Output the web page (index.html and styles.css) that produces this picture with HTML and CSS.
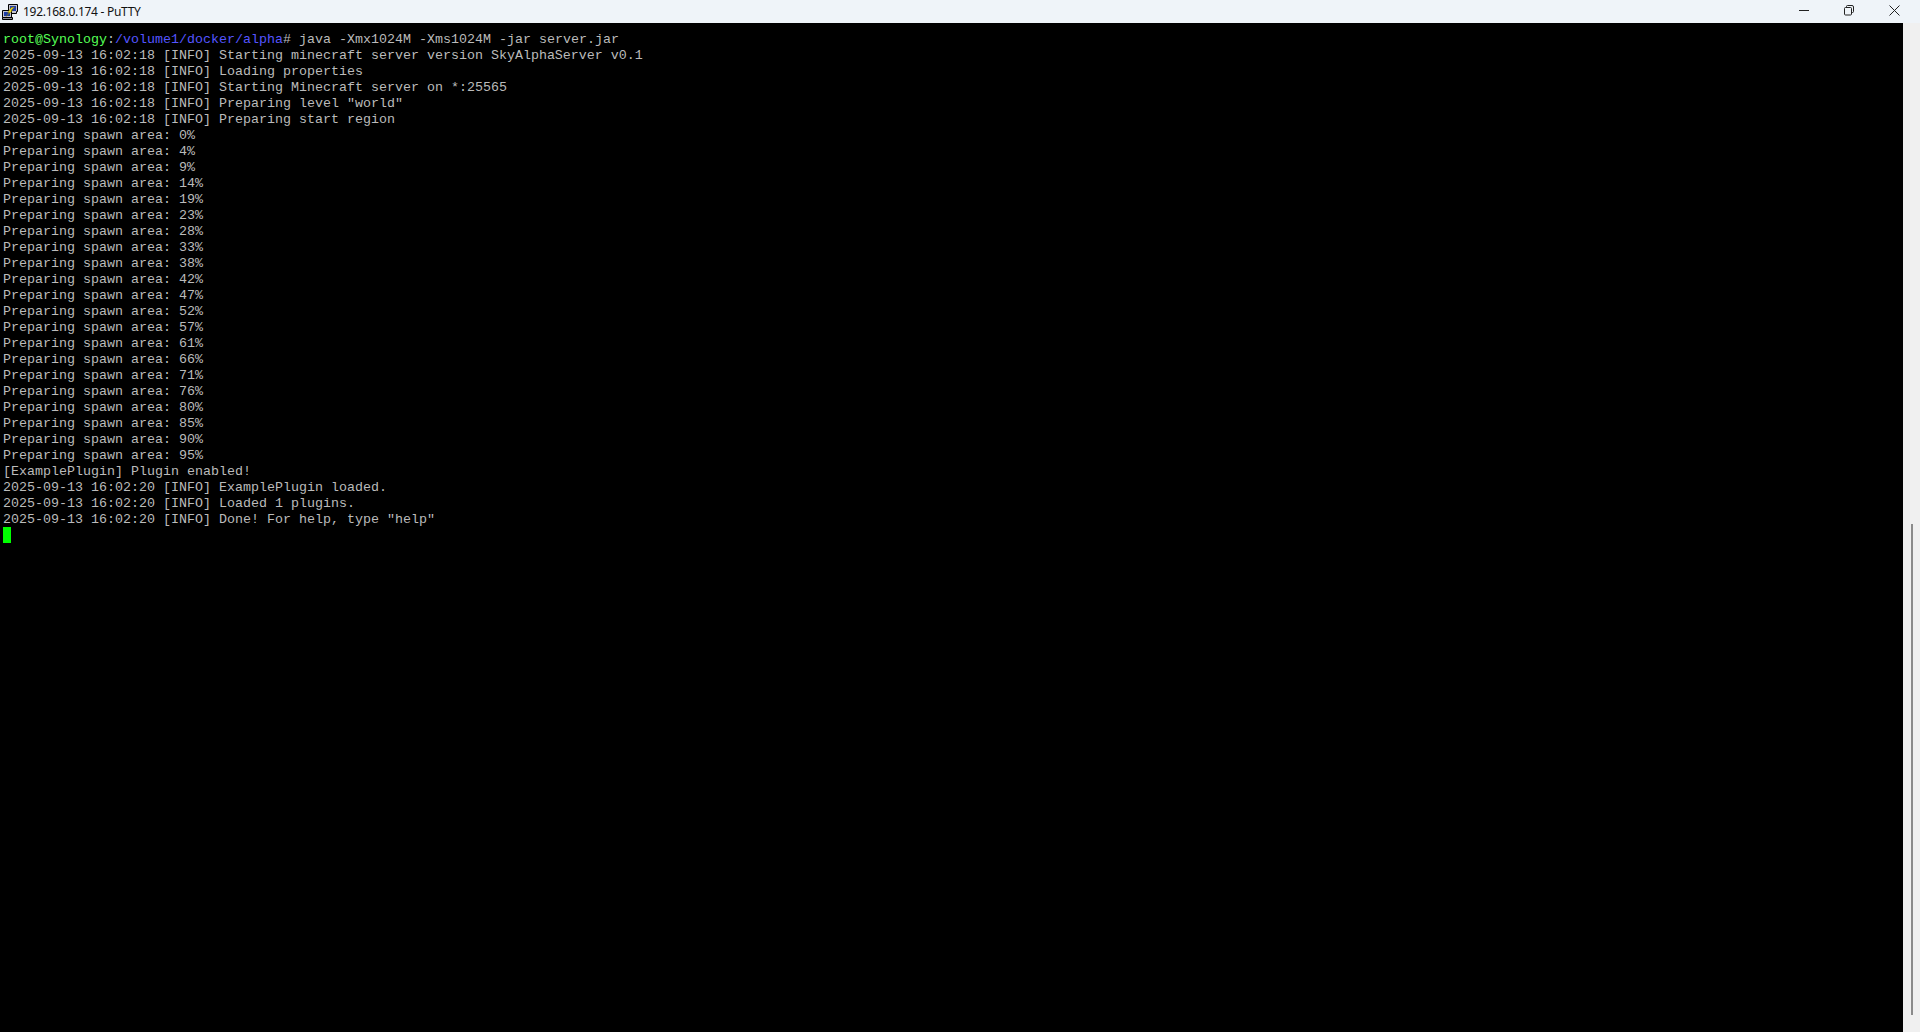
FILE: index.html
```html
<!DOCTYPE html>
<html lang="en">
<head>
<meta charset="utf-8">
<title>192.168.0.174 - PuTTY</title>
<link rel="stylesheet" href="styles.css">
</head>
<body>
<div class="window">
  <header class="titlebar">
    <svg class="app-icon" width="16" height="16" viewBox="0 0 16 16">
      <path d="M6.5 .5h9v7h-1v2h-8z" fill="#c4c4d0" stroke="#000"/>
      <rect x="8" y="2" width="6" height="5" fill="#1f3fa8"/>
      <path d="M.5 6.5h9v7h-9z" fill="#c4c4d0" stroke="#000"/>
      <rect x="2" y="8" width="6" height="4" fill="#1f3fa8"/>
      <path d="M.5 15.5v-2h10v2z" fill="#8c8c98" stroke="#000"/>
      <path d="M12.5 3 L9 6.5 L10.5 6.5 L4 12.5 L7.5 8.5 L5.5 8.5 L9.5 3.5 Z" fill="#f6e41e" stroke="#6a5a00" stroke-width="0.4"/>
    </svg>
    <span class="title">192.168.0.174 - PuTTY</span>
    <div class="controls">
      <button class="ctl" aria-label="Minimize"><svg width="11" height="11" viewBox="0 0 11 11"><path d="M0 5.5h10" stroke="#222" fill="none"/></svg></button>
      <button class="ctl" aria-label="Restore"><svg width="11" height="11" viewBox="0 0 11 11"><rect x="0.5" y="2.5" width="7" height="7.5" rx="1" stroke="#222" fill="none"/><path d="M2.5 2V1.5a1 1 0 0 1 1-1h4.5a1.5 1.5 0 0 1 1.5 1.5v4.5a1 1 0 0 1-1 1H8" stroke="#222" fill="none"/></svg></button>
      <button class="ctl" aria-label="Close"><svg width="11" height="11" viewBox="0 0 11 11"><path d="M.5 .5l10 10M10.5 .5l-10 10" stroke="#222" fill="none"/></svg></button>
    </div>
  </header>
  <div class="body">
    <main class="terminal">
<div class="line"><span class="green">root@Synology</span>:<span class="blue">/volume1/docker/alpha</span># java -Xmx1024M -Xms1024M -jar server.jar</div>
<div class="line">2025-09-13 16:02:18 [INFO] Starting minecraft server version SkyAlphaServer v0.1</div>
<div class="line">2025-09-13 16:02:18 [INFO] Loading properties</div>
<div class="line">2025-09-13 16:02:18 [INFO] Starting Minecraft server on *:25565</div>
<div class="line">2025-09-13 16:02:18 [INFO] Preparing level "world"</div>
<div class="line">2025-09-13 16:02:18 [INFO] Preparing start region</div>
<div class="line">Preparing spawn area: 0%</div>
<div class="line">Preparing spawn area: 4%</div>
<div class="line">Preparing spawn area: 9%</div>
<div class="line">Preparing spawn area: 14%</div>
<div class="line">Preparing spawn area: 19%</div>
<div class="line">Preparing spawn area: 23%</div>
<div class="line">Preparing spawn area: 28%</div>
<div class="line">Preparing spawn area: 33%</div>
<div class="line">Preparing spawn area: 38%</div>
<div class="line">Preparing spawn area: 42%</div>
<div class="line">Preparing spawn area: 47%</div>
<div class="line">Preparing spawn area: 52%</div>
<div class="line">Preparing spawn area: 57%</div>
<div class="line">Preparing spawn area: 61%</div>
<div class="line">Preparing spawn area: 66%</div>
<div class="line">Preparing spawn area: 71%</div>
<div class="line">Preparing spawn area: 76%</div>
<div class="line">Preparing spawn area: 80%</div>
<div class="line">Preparing spawn area: 85%</div>
<div class="line">Preparing spawn area: 90%</div>
<div class="line">Preparing spawn area: 95%</div>
<div class="line">[ExamplePlugin] Plugin enabled!</div>
<div class="line">2025-09-13 16:02:20 [INFO] ExamplePlugin loaded.</div>
<div class="line">2025-09-13 16:02:20 [INFO] Loaded 1 plugins.</div>
<div class="line">2025-09-13 16:02:20 [INFO] Done! For help, type "help"</div>
<div class="cursor"></div>
    </main>
    <aside class="scrollbar"><div class="thumb"></div></aside>
  </div>
</div>
</body>
</html>
```
FILE: styles.css
```css
* { box-sizing: border-box; }
html, body { margin: 0; height: 100%; overflow: hidden; background: #000; }
.window { display: flex; flex-direction: column; height: 1032px; width: 1920px; }
.titlebar {
  display: flex; align-items: center; height: 23px; flex: none;
  background: #eff4f9; padding-left: 2px;
  font: 12px "Noto Sans", "Liberation Sans", sans-serif; color: #111;
  letter-spacing: -0.28px;
}
.app-icon { flex: none; margin-right: 5px; }
.title { white-space: nowrap; }
.controls { margin-left: auto; display: flex; align-items: flex-start; height: 100%; padding-right: 3px; }
.ctl {
  width: 45px; height: 21px; padding: 0; border: 0; background: none;
  display: flex; align-items: center; justify-content: center;
}
.body { flex: 1; display: flex; min-height: 0; }
.terminal {
  flex: 1; background: #000; color: #bbb; padding: 8px 0 0 3px;
  font: 13.333px/18px "Liberation Mono", monospace;
}
.line { height: 16px; white-space: pre; }
.green { color: #55ff55; }
.blue { color: #5555ff; }
.cursor { width: 8px; height: 16px; background: #00ff00; }
.scrollbar { width: 17px; flex: none; background: #f0f0f0; padding: 501px 0 0 8px; }
.thumb { width: 2px; height: 491px; background: #8b8b8b; }
```
